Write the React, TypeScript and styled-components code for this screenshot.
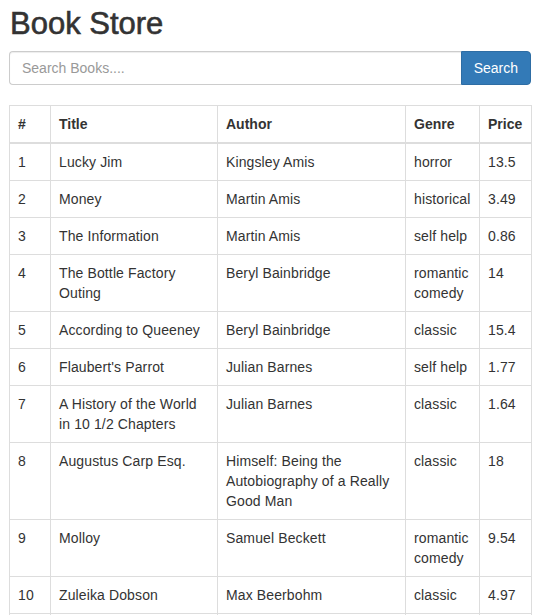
import React from "react";
import styled, { createGlobalStyle } from "styled-components";

const GlobalStyle = createGlobalStyle`
  html, body { margin: 0; padding: 0; background: #fff; }
  body {
    font-family: "Liberation Sans", Arial, Helvetica, sans-serif;
    font-size: 14px;
    line-height: 1.42857143;
    color: #333;
  }
  * { box-sizing: border-box; }
`;

const Container = styled.div`
  padding: 7px 15px 0 9px;
`;

const Heading = styled.h1`
  margin: 0 0 11px 1px;
  font-size: 31px;
  font-weight: 500;
  line-height: 33px;
  color: #333;
  -webkit-text-stroke: 0.6px #333;
`;

const SearchGroup = styled.div`
  display: flex;
  width: 100%;
`;

const SearchInput = styled.input`
  flex: 1;
  min-width: 0;
  height: 34px;
  padding: 6px 12px;
  font-family: inherit;
  font-size: 14px;
  color: #555;
  background: #fff;
  border: 1px solid #ccc;
  border-right: none;
  border-radius: 4px 0 0 4px;
  box-shadow: inset 0 1px 1px rgba(0, 0, 0, 0.075);
  outline: none;
  &::placeholder { color: #999; }
`;

const SearchButton = styled.button`
  height: 34px;
  padding: 6px 12px;
  font-family: inherit;
  font-size: 14px;
  line-height: 20px;
  color: #fff;
  background: #337ab7;
  border: 1px solid #2e6da4;
  border-radius: 0 4px 4px 0;
  cursor: pointer;
`;

const Table = styled.table`
  width: 100%;
  margin-top: 20px;
  border-collapse: collapse;
  border-spacing: 0;
  table-layout: fixed;
  border: 1px solid #ddd;
`;

const Col = styled.col<{ $w: number }>`
  width: ${(p) => p.$w}px;
`;

const Th = styled.th`
  padding: 8px;
  text-align: left;
  vertical-align: bottom;
  font-weight: bold;
  line-height: 20px;
  border: 1px solid #ddd;
  border-bottom: 2px solid #ddd;
`;

const Td = styled.td`
  padding: 8px;
  vertical-align: top;
  line-height: 20px;
  letter-spacing: 0.12px;
  border: 1px solid #ddd;
`;

const books: [string, string, string, string][] = [
  ["Lucky Jim", "Kingsley Amis", "horror", "13.5"],
  ["Money", "Martin Amis", "historical", "3.49"],
  ["The Information", "Martin Amis", "self help", "0.86"],
  ["The Bottle Factory Outing", "Beryl Bainbridge", "romantic comedy", "14"],
  ["According to Queeney", "Beryl Bainbridge", "classic", "15.4"],
  ["Flaubert's Parrot", "Julian Barnes", "self help", "1.77"],
  ["A History of the World in 10 1/2 Chapters", "Julian Barnes", "classic", "1.64"],
  ["Augustus Carp Esq.", "Himself: Being the Autobiography of a Really Good Man", "classic", "18"],
  ["Molloy", "Samuel Beckett", "romantic comedy", "9.54"],
  ["Zuleika Dobson", "Max Beerbohm", "classic", "4.97"],
  ["The History Man", "Malcolm Bradbury", "horror", "8.12"],
  ["A Clockwork Orange", "Anthony Burgess", "classic", "6.2"],
];

const widths = [41, 167, 188, 74, 52];

export default function App() {
  return (
    <>
      <GlobalStyle />
      <Container>
        <Heading>Book Store</Heading>
        <SearchGroup>
          <SearchInput placeholder="Search Books...." />
          <SearchButton>Search</SearchButton>
        </SearchGroup>
        <Table>
          <colgroup>
            {widths.map((w, i) => (
              <Col key={i} $w={w} />
            ))}
          </colgroup>
          <thead>
            <tr>
              <Th>#</Th>
              <Th>Title</Th>
              <Th>Author</Th>
              <Th>Genre</Th>
              <Th>Price</Th>
            </tr>
          </thead>
          <tbody>
            {books.map((b, i) => (
              <tr key={i}>
                <Td>{i + 1}</Td>
                <Td>{b[0]}</Td>
                <Td>{b[1]}</Td>
                <Td>{b[2]}</Td>
                <Td>{b[3]}</Td>
              </tr>
            ))}
          </tbody>
        </Table>
      </Container>
    </>
  );
}
